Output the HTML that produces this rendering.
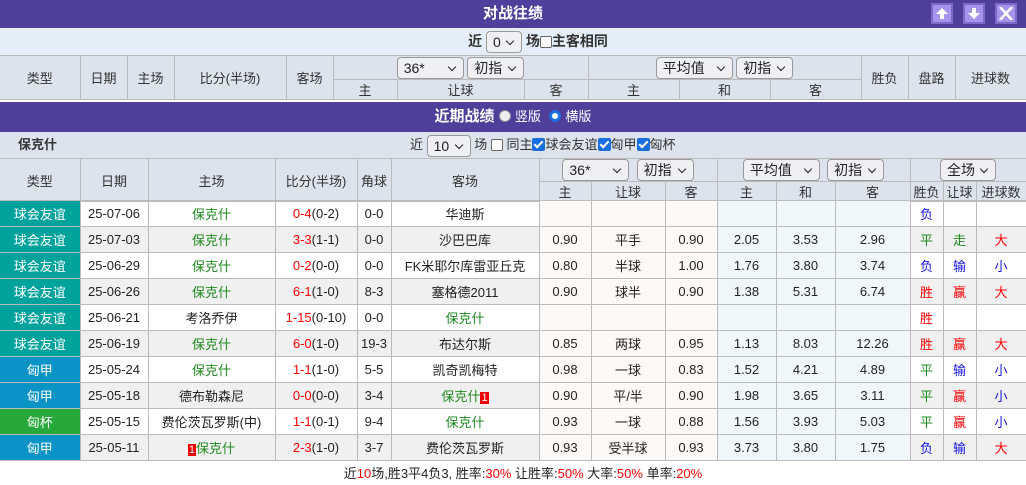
<!DOCTYPE html>
<html><head><meta charset="utf-8"><style>
*{box-sizing:border-box;margin:0;padding:0}
body{width:1026px;height:485px;overflow:hidden;background:#fff;font-family:"Liberation Sans","Noto Sans CJK SC",sans-serif;font-size:13px;color:#222;position:relative}
.bar{position:absolute;left:0;width:1026px;background:#4f3f9b;color:#fff;font-weight:bold;font-size:15px;text-align:center}
.btn{position:absolute;top:3px;width:22px;height:21px;background:#a593ec;border:2px solid #7c6acb}
.btn svg{position:absolute;left:2px;top:2px}
table{border-collapse:collapse;table-layout:fixed;position:absolute;left:0;width:1026px}
td{border:1px solid #bbb;text-align:center;white-space:nowrap;overflow:hidden;padding:0}
tr td:first-child{border-left:none}
.h td{background:#dde3ec;color:#333}
.sel{display:inline-block;border:1px solid #999;border-radius:4px;background:#eef0f4;height:22px;line-height:20px;text-align:left;padding-left:6px;font-size:14px;color:#222;position:relative;vertical-align:middle}
.sel:after{content:"";position:absolute;right:8px;top:6px;width:5px;height:5px;border-right:1.5px solid #222;border-bottom:1.5px solid #222;transform:rotate(45deg)}
.cb{display:inline-block;width:12px;height:12px;border:1px solid #666;border-radius:2px;vertical-align:-2px;background:#fff}
.ck{display:inline-block;width:13px;height:13px;border-radius:2px;background:#1a6fe0;vertical-align:-2px;position:relative}
.ck:after{content:"";position:absolute;left:4px;top:1px;width:3px;height:7px;border-right:2px solid #fff;border-bottom:2px solid #fff;transform:rotate(45deg)}
.d td{height:26px;font-size:13px}
.d tr:nth-child(even) td{background:#f0f0f0}
.t1{background:#00a29c!important;color:#fff}
.t2{background:#0a94c6!important;color:#fff}
.t3{background:#27a83a!important;color:#fff}
.g{color:#1e8a1e}
.r{color:#f00}
.b{color:#1515e6}
.o1{background:#fdf9f6}
.o2{background:#f0f7fb}
.d tr:nth-child(even) td.o1{background:#fdf9f6}
.d tr:nth-child(even) td.o2{background:#f0f7fb}
.rk{background:#e00;color:#fff;font-size:11px;padding:0 1px}
</style></head><body>
<div class="bar" style="top:0;height:28px;line-height:28px">对战往绩</div>
<div class="btn" style="left:931px"><svg width="14" height="13" viewBox="0 0 14 13"><path d="M7 1 L13 7 H9 V12 H5 V7 H1 Z" fill="#fff"/></svg></div>
<div class="btn" style="left:963px"><svg width="14" height="13" viewBox="0 0 14 13"><path d="M7 12 L13 6 H9 V1 H5 V6 H1 Z" fill="#fff"/></svg></div>
<div class="btn" style="left:995px"><svg width="14" height="13" viewBox="0 0 14 13"><path d="M1 0 L13 13 M13 0 L1 13" stroke="#fff" stroke-width="2.5"/></svg></div>
<div style="position:absolute;top:28px;left:0;width:1026px;height:27px;background:#e4eef8;text-align:center;line-height:27px;font-weight:bold;font-size:14px;color:#333;padding-left:50px">近 <span class="sel" style="width:36px;font-weight:normal">0</span> 场<span class="cb"></span>主客相同</div>
<table class="h" style="top:55px">
<colgroup><col style="width:80px"><col style="width:47px"><col style="width:47px"><col style="width:112px"><col style="width:47px"><col style="width:64px"><col style="width:127px"><col style="width:64px"><col style="width:91px"><col style="width:91px"><col style="width:91px"><col style="width:47px"><col style="width:47px"><col style="width:71px"></colgroup>
<tr style="height:24px"><td rowspan="2">类型</td><td rowspan="2">日期</td><td rowspan="2">主场</td><td rowspan="2">比分(半场)</td><td rowspan="2">客场</td><td colspan="3"><span class="sel" style="width:67px">36*</span> <span class="sel" style="width:57px">初指</span></td><td colspan="3"><span class="sel" style="width:77px">平均值</span> <span class="sel" style="width:57px">初指</span></td><td rowspan="2">胜负</td><td rowspan="2">盘路</td><td rowspan="2">进球数</td></tr>
<tr style="height:19px"><td>主</td><td>让球</td><td>客</td><td>主</td><td>和</td><td>客</td></tr>
</table>
<div class="bar" style="top:102px;height:30px;line-height:30px">近期战绩 <span style="display:inline-block;width:12px;height:12px;border-radius:50%;background:#eee;border:1px solid #999;vertical-align:-1px"></span> <span style="font-weight:normal;font-size:13px">竖版</span> &nbsp;<span style="display:inline-block;width:12px;height:12px;border-radius:50%;background:#fff;border:3px solid #1a6fe0;vertical-align:-1px"></span> <span style="font-weight:normal;font-size:13px">横版</span></div>
<div style="position:absolute;top:132px;left:0;width:1026px;height:26px;background:#dde3ec;line-height:26px">
<span style="position:absolute;left:18px;font-weight:bold;color:#333">保克什</span>
<span style="position:absolute;left:410px;color:#333">近 <span class="sel" style="width:44px">10</span> 场 <span class="cb"></span> 同主<span class="ck"></span>球会友谊<span class="ck"></span>匈甲<span class="ck"></span>匈杯</span></div>
<table class="h" style="top:158px">
<colgroup><col style="width:80px"><col style="width:68px"><col style="width:127px"><col style="width:82px"><col style="width:34px"><col style="width:148px"><col style="width:52px"><col style="width:74px"><col style="width:52px"><col style="width:59px"><col style="width:59px"><col style="width:75px"><col style="width:33px"><col style="width:33px"><col style="width:50px"></colgroup>
<tr style="height:23px"><td rowspan="2">类型</td><td rowspan="2">日期</td><td rowspan="2">主场</td><td rowspan="2">比分(半场)</td><td rowspan="2">角球</td><td rowspan="2">客场</td><td colspan="3"><span class="sel" style="width:67px">36*</span> &nbsp;<span class="sel" style="width:57px">初指</span></td><td colspan="3"><span class="sel" style="width:77px">平均值</span> &nbsp;<span class="sel" style="width:57px">初指</span></td><td colspan="3"><span class="sel" style="width:56px">全场</span></td></tr>
<tr style="height:19px"><td>主</td><td>让球</td><td>客</td><td>主</td><td>和</td><td>客</td><td>胜负</td><td>让球</td><td>进球数</td></tr>
</table>
<table class="d" style="top:200px">
<colgroup><col style="width:80px"><col style="width:68px"><col style="width:127px"><col style="width:82px"><col style="width:34px"><col style="width:148px"><col style="width:52px"><col style="width:74px"><col style="width:52px"><col style="width:59px"><col style="width:59px"><col style="width:75px"><col style="width:33px"><col style="width:33px"><col style="width:50px"></colgroup>
<tr><td class="t1">球会友谊</td><td>25-07-06</td><td class="g">保克什</td><td><span class="r">0-4</span>(0-2)</td><td>0-0</td><td>华迪斯</td><td class="o1"></td><td class="o1"></td><td class="o1"></td><td class="o2"></td><td class="o2"></td><td class="o2"></td><td class="b">负</td><td></td><td></td></tr>
<tr><td class="t1">球会友谊</td><td>25-07-03</td><td class="g">保克什</td><td><span class="r">3-3</span>(1-1)</td><td>0-0</td><td>沙巴巴库</td><td class="o1">0.90</td><td class="o1">平手</td><td class="o1">0.90</td><td class="o2">2.05</td><td class="o2">3.53</td><td class="o2">2.96</td><td class="g">平</td><td class="g">走</td><td class="r">大</td></tr>
<tr><td class="t1">球会友谊</td><td>25-06-29</td><td class="g">保克什</td><td><span class="r">0-2</span>(0-0)</td><td>0-0</td><td>FK米耶尔库雷亚丘克</td><td class="o1">0.80</td><td class="o1">半球</td><td class="o1">1.00</td><td class="o2">1.76</td><td class="o2">3.80</td><td class="o2">3.74</td><td class="b">负</td><td class="b">输</td><td class="b">小</td></tr>
<tr><td class="t1">球会友谊</td><td>25-06-26</td><td class="g">保克什</td><td><span class="r">6-1</span>(1-0)</td><td>8-3</td><td>塞格德2011</td><td class="o1">0.90</td><td class="o1">球半</td><td class="o1">0.90</td><td class="o2">1.38</td><td class="o2">5.31</td><td class="o2">6.74</td><td class="r">胜</td><td class="r">赢</td><td class="r">大</td></tr>
<tr><td class="t1">球会友谊</td><td>25-06-21</td><td>考洛乔伊</td><td><span class="r">1-15</span>(0-10)</td><td>0-0</td><td class="g">保克什</td><td class="o1"></td><td class="o1"></td><td class="o1"></td><td class="o2"></td><td class="o2"></td><td class="o2"></td><td class="r">胜</td><td></td><td></td></tr>
<tr><td class="t1">球会友谊</td><td>25-06-19</td><td class="g">保克什</td><td><span class="r">6-0</span>(1-0)</td><td>19-3</td><td>布达尔斯</td><td class="o1">0.85</td><td class="o1">两球</td><td class="o1">0.95</td><td class="o2">1.13</td><td class="o2">8.03</td><td class="o2">12.26</td><td class="r">胜</td><td class="r">赢</td><td class="r">大</td></tr>
<tr><td class="t2">匈甲</td><td>25-05-24</td><td class="g">保克什</td><td><span class="r">1-1</span>(1-0)</td><td>5-5</td><td>凯奇凯梅特</td><td class="o1">0.98</td><td class="o1">一球</td><td class="o1">0.83</td><td class="o2">1.52</td><td class="o2">4.21</td><td class="o2">4.89</td><td class="g">平</td><td class="b">输</td><td class="b">小</td></tr>
<tr><td class="t2">匈甲</td><td>25-05-18</td><td>德布勒森尼</td><td><span class="r">0-0</span>(0-0)</td><td>3-4</td><td class="g">保克什<span class="rk">1</span></td><td class="o1">0.90</td><td class="o1">平/半</td><td class="o1">0.90</td><td class="o2">1.98</td><td class="o2">3.65</td><td class="o2">3.11</td><td class="g">平</td><td class="r">赢</td><td class="b">小</td></tr>
<tr><td class="t3">匈杯</td><td>25-05-15</td><td>费伦茨瓦罗斯(中)</td><td><span class="r">1-1</span>(0-1)</td><td>9-4</td><td class="g">保克什</td><td class="o1">0.93</td><td class="o1">一球</td><td class="o1">0.88</td><td class="o2">1.56</td><td class="o2">3.93</td><td class="o2">5.03</td><td class="g">平</td><td class="r">赢</td><td class="b">小</td></tr>
<tr><td class="t2">匈甲</td><td>25-05-11</td><td class="g"><span class="rk">1</span>保克什</td><td><span class="r">2-3</span>(1-0)</td><td>3-7</td><td>费伦茨瓦罗斯</td><td class="o1">0.93</td><td class="o1">受半球</td><td class="o1">0.93</td><td class="o2">3.73</td><td class="o2">3.80</td><td class="o2">1.75</td><td class="b">负</td><td class="b">输</td><td class="r">大</td></tr>
</table>
<div style="position:absolute;top:463px;left:0;width:1026px;text-align:center;font-size:13px;line-height:22px;padding-left:20px">近<span class="r">10</span>场,胜3平4负3, 胜率:<span class="r">30%</span> 让胜率:<span class="r">50%</span> 大率:<span class="r">50%</span> 单率:<span class="r">20%</span></div>
</body></html>
